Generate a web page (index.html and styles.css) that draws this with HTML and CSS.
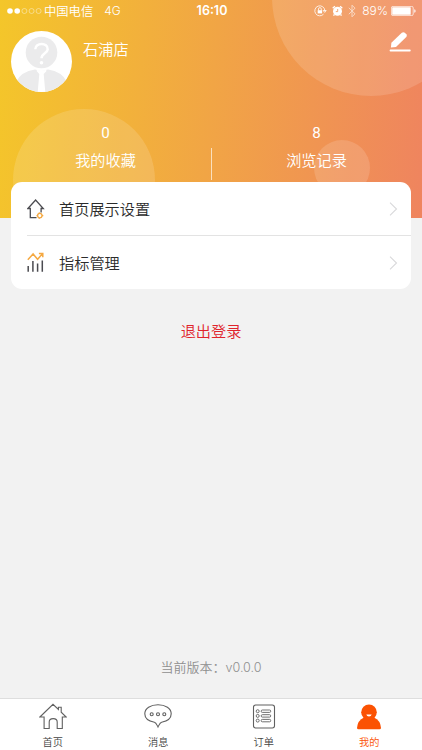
FILE: index.html
```
<!DOCTYPE html>
<html lang="zh-CN">
<head>
<meta charset="utf-8">
<title>我的</title>
<link rel="stylesheet" href="styles.css">
</head>
<body>
<div class="app">
  <header class="hero">
    <svg class="bubbles" viewBox="0 0 422 218" aria-hidden="true">
      <circle cx="371" cy="-3" r="99"/><circle cx="84" cy="180" r="71"/><circle cx="342" cy="168" r="28"/>
    </svg>
    <div class="status">
      <div class="status-left">
        <svg class="signal" width="35" height="8" viewBox="0 0 35 8"><g fill="#fff"><circle cx="3" cy="4" r="2.8"/><circle cx="10.2" cy="4" r="2.8"/></g><g fill="none" stroke="#fff" stroke-width=".6" opacity=".7"><circle cx="17.4" cy="4" r="2.5"/><circle cx="24.6" cy="4" r="2.5"/><circle cx="31.6" cy="4" r="2.5"/></g></svg>
        <span class="carrier">中国电信</span><span class="network">4G</span>
      </div>
      <div class="clock">16:10</div>
      <div class="status-right">
        <svg width="13" height="12" viewBox="0 0 13 12" fill="none" stroke="#fff"><path d="M9.5 9.2A5 5 0 1 1 10.8 5.5M9.2 5.5h3l-1.5 1.9z" stroke-width=".8"/><rect x="3.7" y="5.2" width="4.4" height="3.2" fill="#fff" stroke="none"/><path d="M4.5 5.4V4a1.4 1.4 0 0 1 2.8 0v1.4" stroke-width=".8"/></svg>
        <svg class="alarm" width="11" height="12" viewBox="0 0 11 12"><circle cx="5.5" cy="6.3" r="4.5" fill="#fff"/><path d="M.7 3.2 2.9 1.2M10.3 3.2 8.1 1.2M2.4 9.5 1.5 10.7M8.6 9.5l.9 1.2" stroke="#fff" stroke-width="1.3"/><path d="M5.7 4v2.6H3.8" stroke="#f1a06b" fill="none" stroke-width=".9"/></svg>
        <svg class="bluetooth" width="8" height="14" viewBox="0 0 8 14"><path d="M.8 3.8 7 9.8 4 12.8V1.2L7 4.2.8 10.2" fill="none" stroke="#fff" stroke-width=".9"/></svg>
        <span class="percent">89%</span>
        <svg class="battery" width="25" height="10" viewBox="0 0 25 10"><rect x=".4" y=".4" width="21.8" height="9.2" rx="1.5" fill="none" stroke="#fff" stroke-width=".7"/><rect x="1.2" y="1.2" width="18.5" height="7.6" rx=".5" fill="#fff"/><path d="M23.3 3.2q1.3.3 1.3 1.8t-1.3 1.8z" fill="#fff"/></svg>
      </div>
    </div>
    <div class="profile">
      <svg class="avatar" width="61" height="61" viewBox="0 0 61 61">
        <defs><clipPath id="face"><circle cx="30.5" cy="30.5" r="30.5"/></clipPath></defs>
        <g clip-path="url(#face)"><path fill="#fff" d="M0 0h61v61H0z"/><circle cx="30.5" cy="21.5" r="15.8" fill="#ebebec"/><path d="M5 61V51Q10 40.5 24 38.5l6 1.5 7-1.5Q51 40.5 56 51v10z" fill="#ebebec"/><path d="M25.8 38.7q5 1.2 9.5 0v1.6l-2.600 2.700 1.600 18h-7.600l1.600-18-2.500-2.700z" fill="#fff"/><path d="M24.300 18.200c0-7.200 12.800-7 12.400.2-.2 4-6.200 3.800-6.200 8.800" fill="none" stroke="#fff" stroke-width="2.500"/><circle cx="30.500" cy="31.700" r="1.800" fill="#fff"/></g>
      </svg>
      <h1 class="name">石浦店</h1>
      <svg class="edit" width="22" height="22" viewBox="0 0 22 22"><path d="m2.400 11.700 10.400-9.900q1.500-1.300 3 0l1.500 1.500q1.200 1.400 0 2.800L7 16l-5.100.5z" fill="#fff"/><path d="M1.500 19.500h19.300" stroke="#fff" stroke-width="1.800" stroke-linecap="round"/></svg>
    </div>
    <div class="stats">
      <div class="stat"><span class="count">0</span><span>我的收藏</span></div>
      <div class="stat"><span class="count">8</span><span>浏览记录</span></div>
    </div>
  </header>
  <main class="main">
    <section class="card">
      <div class="row">
        <svg class="row-icon" width="18" height="22" viewBox="0 0 18 22" fill="none" stroke="#4b4b50" stroke-width="1.300"><path d="M9.500 19.700H3.300v-9.200H.9L8.600 2l7.700 8.500h-2.200v4"/><g stroke="#f5a942"><path d="m12 14.500.5 1M12 20.700l.5-1M9.500 17.600h1.300"/><circle cx="12.800" cy="17.600" r="2.200"/><path d="M15 17.600h1.300"/></g></svg>
        <span class="row-label">首页展示设置</span>
        <svg class="chevron" width="9" height="14" viewBox="0 0 9 14"><path d="m1 .7 6.500 6.300L1 13.300"/></svg>
      </div>
      <div class="row">
        <svg class="row-icon" width="18" height="22" viewBox="0 0 18 22" fill="none" stroke-width="1.500"><path d="M1.200 19.700v-5.800M5.900 19.700V9M10.600 19.700v-8.300M15.300 19.700V8.400" stroke="#4b4b50"/><path d="m.8 7.800 5.300-5.800 4.500 5.300 5-5.700M11.900 1.400h3.900v3.900" stroke="#f5a942"/></svg>
        <span class="row-label">指标管理</span>
        <svg class="chevron" width="9" height="14" viewBox="0 0 9 14"><path d="m1 .7 6.500 6.300L1 13.300"/></svg>
      </div>
    </section>
    <div class="logout">退出登录</div>
    <div class="version">当前版本：<span class="number">v0.0.0</span></div>
  </main>
  <nav class="tabs">
    <div class="tab"><svg width="28" height="28" viewBox="0 0 28 28"><path d="M.9 14 14 1.300l5.400 5.100V4.200h2.800v5L27.200 14h-3.900v11.500h-5.100v-6.600q0-3.300-4-3.300t-4 3.300v6.600H5.100V14z"/></svg><span>首页</span></div>
    <div class="tab"><svg width="28" height="28" viewBox="0 0 28 28"><path d="M14 1.800c7.500 0 13.200 3.700 13.200 9 0 4.200-3.800 7.400-9.600 8.400-1.800.4-2.500 2.800-3.600 4.800-1.100-2-1.800-4.400-3.600-4.800C4.600 18.200.8 15 .8 10.800c0-5.300 5.700-9 13.200-9z"/><circle cx="7.700" cy="11.300" r="1.500"/><circle cx="14" cy="11.300" r="1.500"/><circle cx="20.300" cy="11.300" r="1.500"/></svg><span>消息</span></div>
    <div class="tab"><svg width="28" height="28" viewBox="0 0 28 28"><rect x="3.500" y="2" width="21" height="23" rx="2.200"/><g stroke-width=".9"><circle cx="7.700" cy="8.200" r="1.500"/><circle cx="7.700" cy="12.900" r="1.500"/><circle cx="7.700" cy="17.600" r="1.500"/><rect x="11.200" y="7" width="9.500" height="2.400" rx="1.100"/><rect x="11.200" y="11.700" width="9.500" height="2.400" rx="1.100"/><rect x="11.200" y="16.400" width="9.500" height="2.400" rx="1.100"/></g></svg><span>订单</span></div>
    <div class="tab active"><svg width="28" height="28" viewBox="0 0 28 28"><circle cx="14" cy="9.300" r="7.800"/><path d="M9 14.500h10q6.500 3 7 10.300 0 1.500-1.500 1.500h-21Q2 26.300 2 24.800 2.500 17.500 9 14.500z"/><path d="M11.300 11.400h5.400q-.6 2-2.700 2t-2.700-2z" class="smile"/></svg><span>我的</span></div>
  </nav>
</div>
</body>
</html>
```
FILE: styles.css
```
* { box-sizing: border-box; }
body {
  margin: 0;
  font-family: "Noto Sans CJK SC", sans-serif;
  font-weight: 350;
  color: #2b2b2b;
}
svg { display: block; flex: none; }
.app {
  height: 750px;
  display: flex;
  flex-direction: column;
  background: #f2f2f2;
  overflow: hidden;
}
.hero {
  position: relative;
  height: 218px;
  flex: none;
  color: #fff;
  background: linear-gradient(95deg, #f4c62a 0%, #f1a545 50%, #ef845f 100%);
}
.bubbles {
  position: absolute;
  inset: 0;
  width: 422px;
  height: 218px;
  fill: rgba(255, 255, 255, .14);
}
.status {
  position: relative;
  height: 22px;
  padding: 0 6px 0 7px;
  display: grid;
  grid-template-columns: 1fr auto 1fr;
  align-items: center;
  font-size: 12px;
  line-height: 22px;
}
.status-left, .status-right { display: flex; align-items: center; }
.status-right { justify-content: flex-end; }
.carrier { margin-left: 2px; font-size: 12.3px; }
.network { margin-left: 11px; font-family: Inter, sans-serif; font-size: 12px; }
.clock { margin-left: 1px; font-family: Inter, sans-serif; font-weight: 600; font-size: 12.5px; }
.alarm { margin-left: 5px; }
.bluetooth { margin-left: 5px; opacity: .65; }
.percent { margin-left: 6px; font-family: Inter, sans-serif; font-size: 12px; }
.battery { margin-left: 3px; }
.profile {
  position: relative;
  height: 98px;
  padding: 9px 11px 0;
  display: flex;
  align-items: flex-start;
}
.name {
  flex: 1;
  margin: 6px 0 0 11px;
  font-size: 15.2px;
  line-height: 22px;
  font-weight: 350;
}
.stats {
  position: relative;
  display: grid;
  grid-template-columns: 1fr 1fr;
}
.stat {
  display: flex;
  flex-direction: column;
  align-items: center;
  gap: 5px;
  font-size: 15.2px;
  line-height: 23px;
}
.count {
  margin-bottom: -3px;
  font-family: Roboto, sans-serif;
  font-weight: 400;
  line-height: 26px;
}
.stat + .stat::before {
  content: "";
  position: absolute;
  left: 211px;
  top: 28px;
  width: 1px;
  height: 32px;
  background: rgba(255, 255, 255, .65);
}
.main {
  flex: 1;
  position: relative;
  display: flex;
  flex-direction: column;
  align-items: stretch;
  margin-top: -36px;
}
.card {
  margin: 0 11px;
  padding-left: 16px;
  background: #fff;
  border-radius: 11px;
}
.row {
  height: 53px;
  padding-right: 13px;
  display: flex;
  align-items: center;
}
.row + .row { height: 54px; border-top: 1px solid #e3e3e3; }
.row-label { flex: 1; margin: -2px 0 0 14px; font-size: 15.2px; line-height: 24px; }
.chevron path { fill: none; stroke: #d9d9db; stroke-width: 1.1; }
.logout {
  margin-top: 29px;
  text-align: center;
  font-size: 15.2px;
  line-height: 24px;
  color: #e0242c;
}
.version {
  margin-top: auto;
  margin-bottom: 20px;
  text-align: center;
  font-size: 13px;
  line-height: 20px;
  color: #8f8f8f;
}
.number { font-family: Inter, sans-serif; font-size: 12.6px; }
.tabs {
  height: 52px;
  flex: none;
  display: grid;
  grid-template-columns: repeat(4, 1fr);
  background: #fff;
  border-top: 1px solid #dedede;
}
.tab {
  padding-top: 4px;
  display: flex;
  flex-direction: column;
  align-items: center;
  font-size: 10.2px;
  line-height: 14px;
  color: #444;
}
.tab span { margin-top: 4px; }
.tab svg { fill: none; stroke: #606060; stroke-width: 1.1; }
.tab.active { color: #fb5203; }
.tab.active svg { fill: #fb5203; stroke: none; }
.tab.active .smile { fill: #fff; }
```
